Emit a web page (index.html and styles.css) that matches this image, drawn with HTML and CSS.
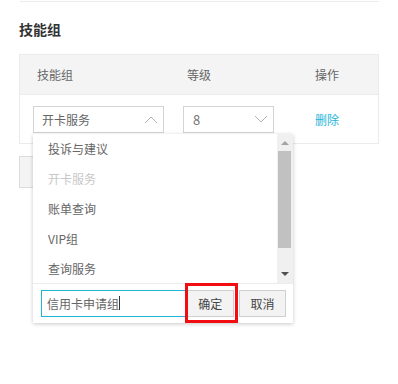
FILE: index.html
```html
<!DOCTYPE html>
<html lang="zh-CN">
<head>
    <meta charset="UTF-8">
    <meta name="viewport" content="width=device-width, initial-scale=1.0">
    <title>技能组</title>
    <link rel="stylesheet" href="styles.css">
</head>
<body>

    <div class="page">
        <div class="divider"></div>
        <h3 class="section-title">技能组</h3>

        <div class="skill-table">
            <div class="row head">
                <div class="cell">技能组</div>
                <div class="cell">等级</div>
                <div class="cell">操作</div>
            </div>
            <div class="row">
                <div class="cell">
                    <div class="select open">
                        <span>开卡服务</span>
                        <svg width="14" height="9" viewBox="0 0 14 9"><polyline points="1,8 7,2 13,8" fill="none" stroke="#b5b5b5" stroke-width="1"/></svg>
                    </div>

                    <!-- 下拉面板 -->
                    <div class="dropdown">
                        <div class="list-wrap">
                            <ul class="options">
                                <li>投诉与建议</li>
                                <li class="disabled">开卡服务</li>
                                <li>账单查询</li>
                                <li>VIP组</li>
                                <li>查询服务</li>
                            </ul>
                            <div class="scrollbar">
                                <div class="arrow up"></div>
                                <div class="thumb"></div>
                                <div class="arrow down"></div>
                            </div>
                        </div>
                        <div class="add-bar">
                            <div class="add-input">信用卡申请组<i class="caret"></i></div>
                            <button class="btn confirm">确定<span class="mark"></span></button>
                            <button class="btn">取消</button>
                        </div>
                    </div>
                </div>
                <div class="cell">
                    <div class="select level">
                        <span>8</span>
                        <svg width="14" height="9" viewBox="0 0 14 9"><polyline points="1,1 7,7 13,1" fill="none" stroke="#b5b5b5" stroke-width="1"/></svg>
                    </div>
                </div>
                <div class="cell">
                    <a class="link" href="#">删除</a>
                </div>
            </div>
        </div>

        <!-- 被下拉面板遮住的按钮 -->
        <button class="add-btn" aria-label="添加"></button>
    </div>

</body>
</html>
```

FILE: styles.css
```css
* {
    box-sizing: border-box;
}

body {
    margin: 0;
    background: #fff;
    font-family: "Microsoft YaHei", "Noto Sans CJK SC", "Noto Sans", sans-serif;
    font-size: 12px;
    color: #666;
}

.page {
    padding: 0 19px;
    width: 398px;
    min-height: 384px;
}

.divider {
    height: 1px;
    margin: 1px 0 0 1px;
    background: #ececec;
}

.section-title {
    margin: 18px 0 0;
    font-size: 14px;
    line-height: 18px;
    font-weight: bold;
    color: #333;
}

/* 表格 */
.skill-table {
    margin-top: 16px;
    width: 360px;
    border: 1px solid #ebebeb;
}

.row {
    display: grid;
    grid-template-columns: 150px 128px 1fr;
    align-items: center;
    height: 48px;
}

.row.head {
    height: 40px;
    background: #f4f4f4;
    border-bottom: 1px solid #ebebeb;
}

.row.head .cell {
    padding-left: 17px;
    color: #666;
}

.cell {
    position: relative;
}

.row:not(.head) .cell {
    padding-left: 13px;
}

.select {
    display: flex;
    align-items: center;
    justify-content: space-between;
    width: 131px;
    height: 27px;
    padding: 0 5px 0 8px;
    border: 1px solid #d4d4d4;
    color: #666;
    font-size: 12px;
}

.select.level {
    width: 91px;
    padding-left: 9px;
    font-size: 13px;
    color: #777;
}

.link {
    display: inline-block;
    padding-left: 4px;
    color: #1fb5d9;
    text-decoration: none;
}

/* 下拉 */
.dropdown {
    position: absolute;
    top: 28px;
    left: 13px;
    width: 260px;
    background: #fff;
    box-shadow: 0 1px 4px rgba(0, 0, 0, 0.22);
    z-index: 10;
}

.list-wrap {
    display: flex;
    height: 149px;
    overflow: hidden;
}

.options {
    flex: 1;
    list-style: none;
    margin: 0;
    padding: 0;
}

.options li {
    height: 30px;
    line-height: 30px;
    padding-left: 15px;
    color: #666;
}

.options li.disabled {
    color: #c8c8c8;
}

.scrollbar {
    position: relative;
    width: 16px;
    background: #f0f0f0;
}

.scrollbar .thumb {
    position: absolute;
    top: 17px;
    left: 1px;
    width: 13px;
    height: 97px;
    background: #c1c1c1;
}

.arrow {
    position: absolute;
    left: 4px;
    width: 0;
    height: 0;
    border-left: 4px solid transparent;
    border-right: 4px solid transparent;
}

.arrow.up {
    top: 7px;
    border-bottom: 4px solid #a3a3a3;
}

.arrow.down {
    top: 138px;
    border-top: 4px solid #505050;
}

.add-bar {
    display: flex;
    align-items: center;
    height: 40px;
    padding: 0 7px 0 8px;
    border-top: 1px solid #ececec;
}

.add-input {
    display: flex;
    align-items: center;
    width: 146px;
    height: 27px;
    padding-left: 5px;
    border: 1px solid #1fb5d4;
    color: #666;
}

.caret {
    display: inline-block;
    width: 1px;
    height: 14px;
    background: #333;
}

.btn {
    position: relative;
    height: 27px;
    padding: 0;
    border: 1px solid #cfcfcf;
    background: #f3f3f3;
    color: #444;
    font-family: inherit;
    font-size: 12px;
}

.btn.confirm {
    width: 48px;
}

.btn + .btn {
    width: 47px;
    margin-left: 5px;
}

.mark {
    position: absolute;
    top: -8px;
    left: -2px;
    right: -5px;
    bottom: -7px;
    border: 3px solid #f10d12;
}

.add-btn {
    display: block;
    margin-top: 12px;
    width: 70px;
    height: 32px;
    border: 1px solid #dcdcdc;
    background: #f4f4f4;
}
```
